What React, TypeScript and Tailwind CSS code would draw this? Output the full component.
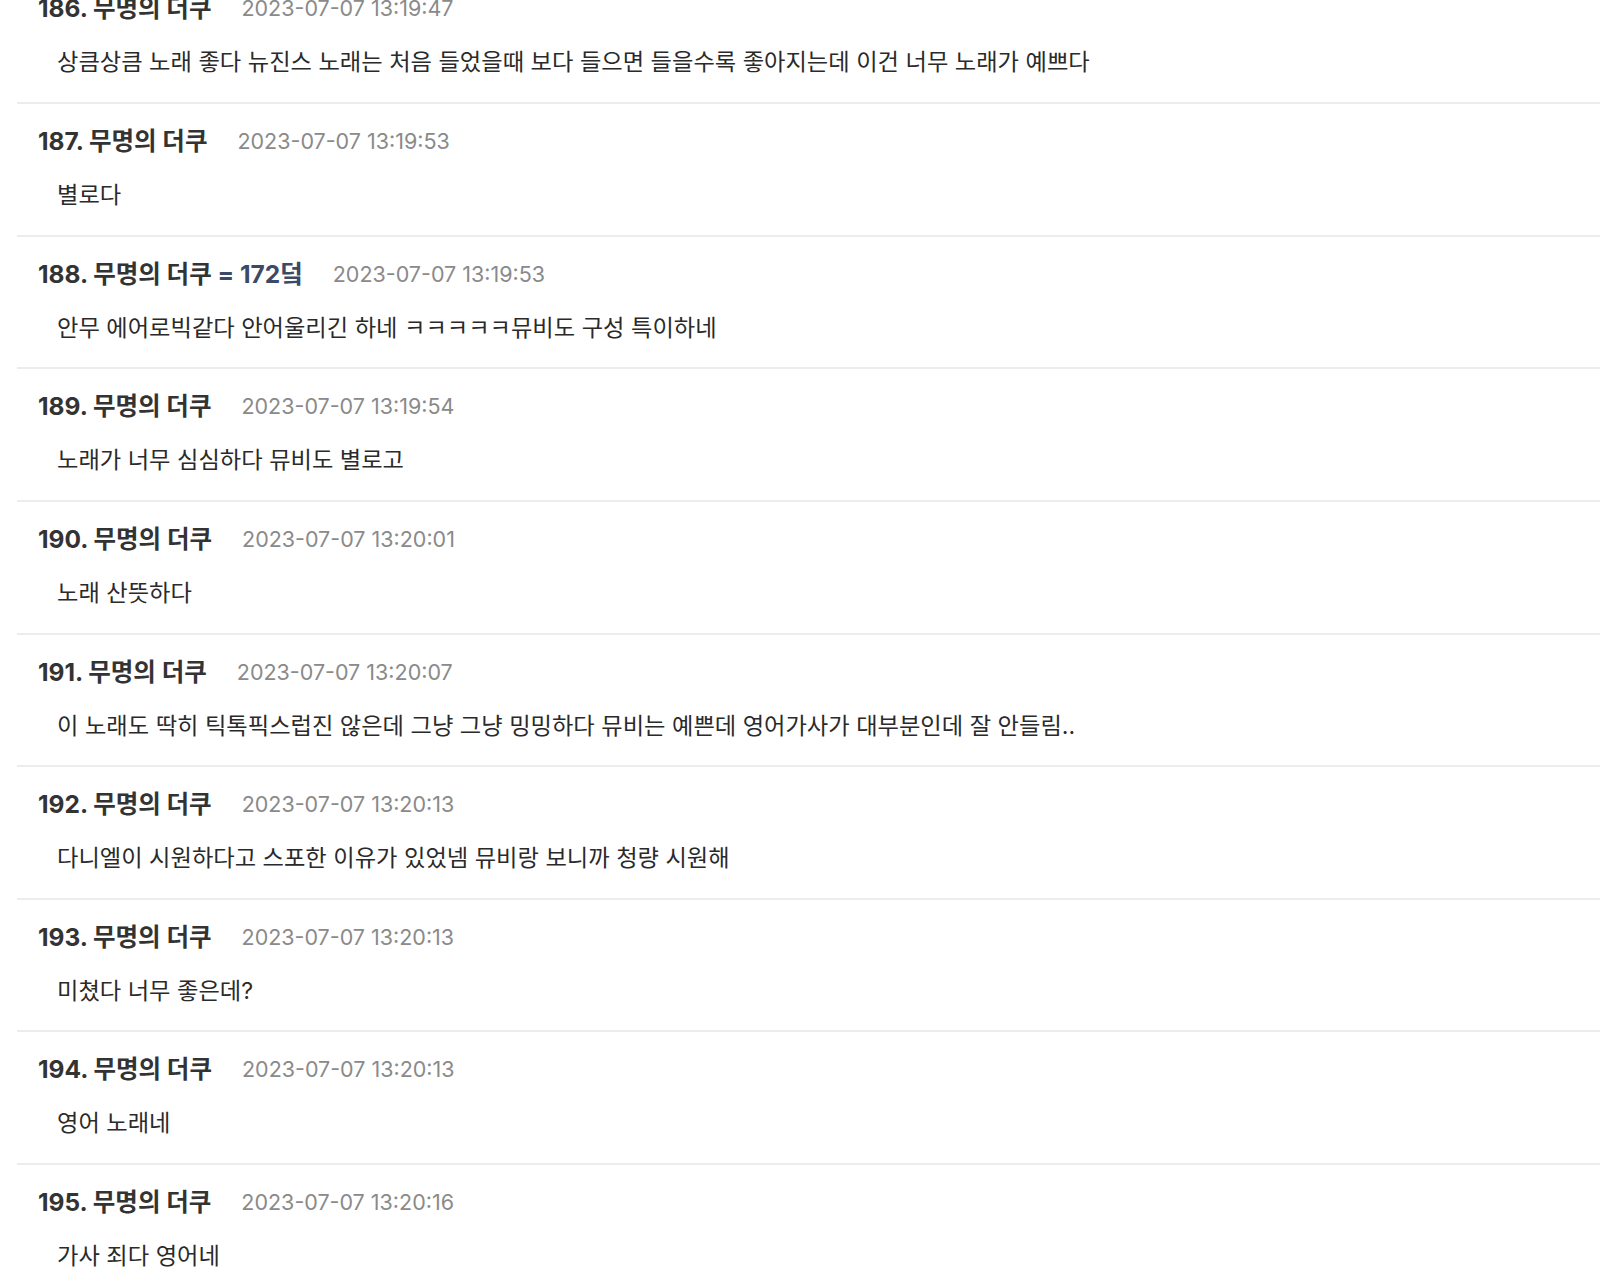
import React from "react";

type Row = { n: number; ts: string; body: string; tag?: string };

const rows: Row[] = [
  { n: 186, ts: "2023-07-07 13:19:47", body: "상큼상큼 노래 좋다 뉴진스 노래는 처음 들었을때 보다 들으면 들을수록 좋아지는데 이건 너무 노래가 예쁘다" },
  { n: 187, ts: "2023-07-07 13:19:53", body: "별로다" },
  { n: 188, ts: "2023-07-07 13:19:53", body: "안무 에어로빅같다 안어울리긴 하네 ㅋㅋㅋㅋㅋ뮤비도 구성 특이하네", tag: "= 172덬" },
  { n: 189, ts: "2023-07-07 13:19:54", body: "노래가 너무 심심하다 뮤비도 별로고" },
  { n: 190, ts: "2023-07-07 13:20:01", body: "노래 산뜻하다" },
  { n: 191, ts: "2023-07-07 13:20:07", body: "이 노래도 딱히 틱톡픽스럽진 않은데 그냥 그냥 밍밍하다 뮤비는 예쁜데 영어가사가 대부분인데 잘 안들림.." },
  { n: 192, ts: "2023-07-07 13:20:13", body: "다니엘이 시원하다고 스포한 이유가 있었넴 뮤비랑 보니까 청량 시원해" },
  { n: 193, ts: "2023-07-07 13:20:13", body: "미쳤다 너무 좋은데?" },
  { n: 194, ts: "2023-07-07 13:20:13", body: "영어 노래네" },
  { n: 195, ts: "2023-07-07 13:20:16", body: "가사 죄다 영어네" },
];

export default function App() {
  return (
    <div
      className="w-[1600px] h-[1282px] overflow-hidden bg-white"
      style={{ fontFamily: 'Inter, "Noto Sans CJK KR", sans-serif' }}
    >
      <div className="ml-[17px] mt-[-30.65px]">
        {rows.map((r) => (
          <div key={r.n} className="h-[132.65px] border-t-2 border-[#ececec]">
            <div className="pl-[21px] pt-[22px] flex items-center h-[52px]">
              <span className="text-[24.5px] leading-[30px] font-bold text-[#333333]">
                {r.n}. 무명의 더쿠
                {r.tag && <span className="text-[#3b4a66]"> {r.tag}</span>}
              </span>
              <span className="ml-[30px] text-[21.5px] leading-[30px] text-[#8a8a8a]">{r.ts}</span>
            </div>
            <div className="pl-[40px] mt-[24px] text-[23.25px] leading-[30px] text-[#2a2a2a]">
              {r.body}
            </div>
          </div>
        ))}
      </div>
    </div>
  );
}
